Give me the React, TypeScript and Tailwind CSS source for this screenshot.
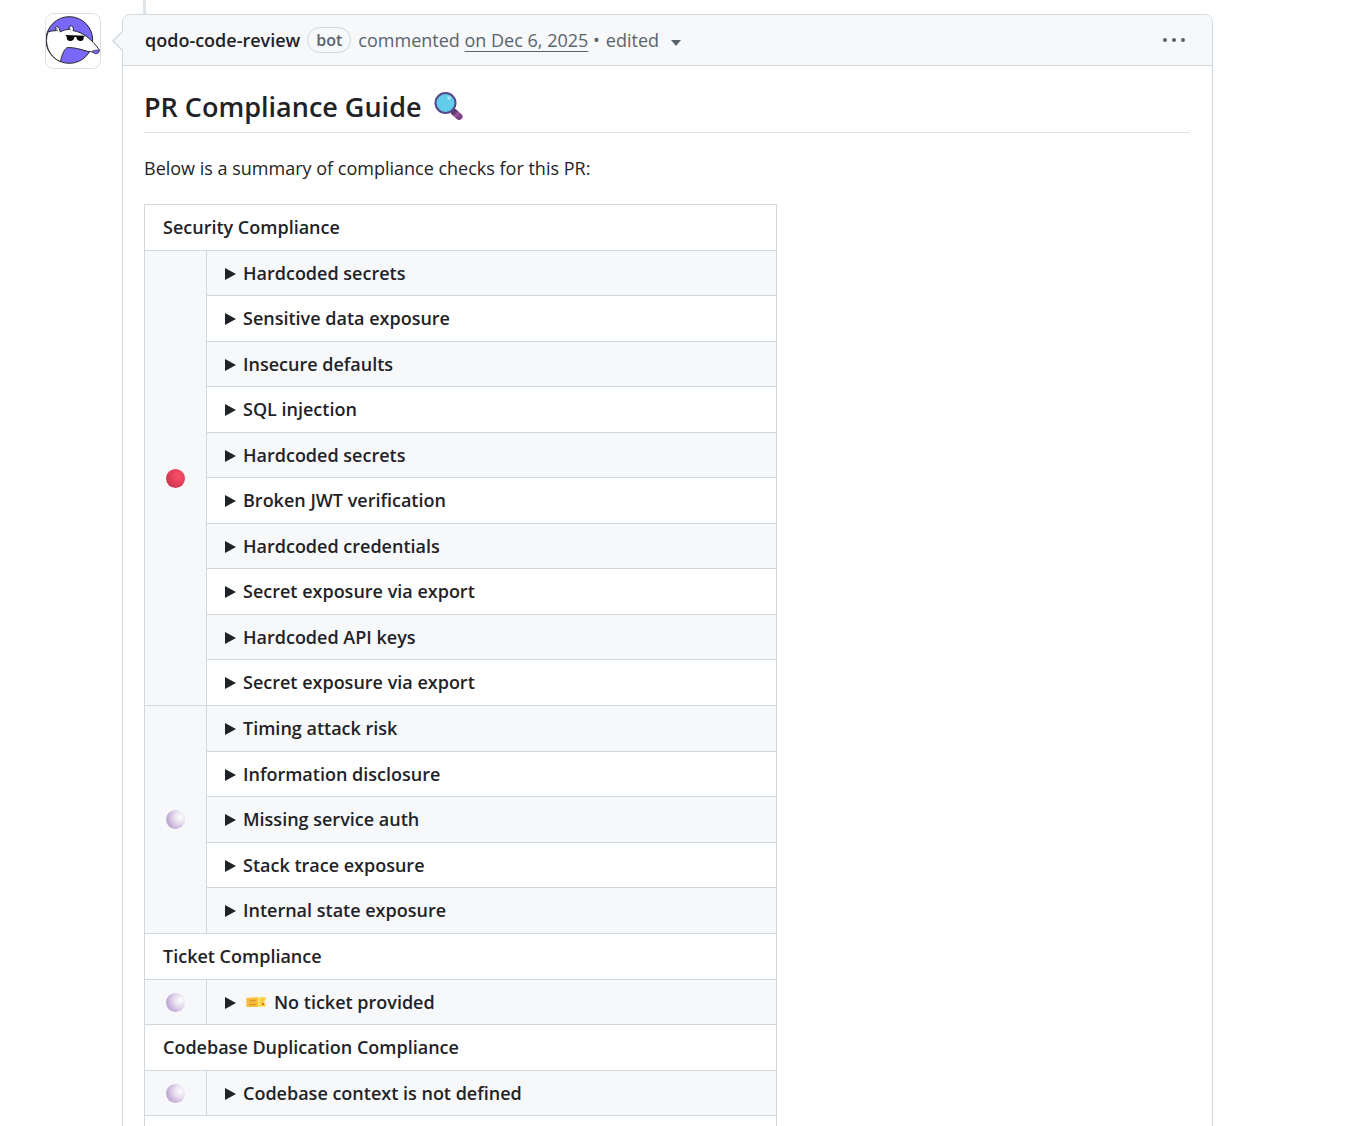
import type React from "react";

type Status = "red" | "white";

interface Check {
  label: string;
  ticket?: boolean;
}

interface CheckGroup {
  title?: string;
  status: Status;
  checks: Check[];
}

const groups: CheckGroup[] = [
  {
    title: "Security Compliance",
    status: "red",
    checks: [
      { label: "Hardcoded secrets" },
      { label: "Sensitive data exposure" },
      { label: "Insecure defaults" },
      { label: "SQL injection" },
      { label: "Hardcoded secrets" },
      { label: "Broken JWT verification" },
      { label: "Hardcoded credentials" },
      { label: "Secret exposure via export" },
      { label: "Hardcoded API keys" },
      { label: "Secret exposure via export" },
    ],
  },
  {
    status: "white",
    checks: [
      { label: "Timing attack risk" },
      { label: "Information disclosure" },
      { label: "Missing service auth" },
      { label: "Stack trace exposure" },
      { label: "Internal state exposure" },
    ],
  },
  {
    title: "Ticket Compliance",
    status: "white",
    checks: [{ label: "No ticket provided", ticket: true }],
  },
  {
    title: "Codebase Duplication Compliance",
    status: "white",
    checks: [{ label: "Codebase context is not defined" }],
  },
];

const Avatar: React.FC = () => (
  <svg
    viewBox="46 39 168 168"
    className="size-14 rounded-lg bg-white"
    role="img"
    aria-label="qodo-code-review"
  >
    <circle cx="119" cy="120" r="70" fill="#7968fa" stroke="#27272d" strokeWidth="3" />
    <path
      d="M55 96C63 93 71 92 80 92C75 84 77 79 82 80C88 81 90 88 92 96C99 91 108 89 119 88C116 81 120 77 126 78C132 80 132 88 130 92C158 95 187 118 209 150C209 158 203 160 193 158C188 156 184 155 174 154C153 149 136 141 112 143C101 151 96 168 92 185A70 70 0 0 1 55 96Z"
      fill="#fff"
      stroke="#27272d"
      strokeWidth="3"
      strokeLinejoin="round"
    />
    <path d="M80 84L84 94M120 83L122 91" stroke="#27272d" strokeWidth="2" fill="none" />
    <path d="M107 105L167 107L162 111C163 118 160 123 153 123C145 123 141 119 140 111L134 111C134 119 129 123 122 123C114 123 111 118 111 110Z" fill="#08080b" />
    <path d="M188 153C194 150 202 150 208 150C209 156 205 162 197 161C192 160 189 157 188 153Z" fill="#7968fa" stroke="#27272d" strokeWidth="2" />
    <rect x="47.5" y="40.5" width="165" height="165" rx="23" fill="none" stroke="#d9dee3" strokeWidth="3" />
  </svg>
);

const MagnifierIcon: React.FC = () => (
  <svg viewBox="0 0 30 30" className="size-[30px]" aria-hidden="true">
    <defs>
      <linearGradient id="handle" x1="0" y1="0" x2="1" y2="1">
        <stop offset="0" stopColor="#5f3a70" />
        <stop offset="0.5" stopColor="#a0569c" />
        <stop offset="1" stopColor="#7b4189" />
      </linearGradient>
    </defs>
    <path d="M17 18L20 21" stroke="#6c5185" strokeWidth="3" />
    <path d="M20.5 20.5L25 24.5" stroke="url(#handle)" strokeWidth="7" strokeLinecap="round" />
    <circle cx="11.5" cy="11" r="10" fill="#62cdeb" stroke="#56488a" strokeWidth="2" />
    <circle cx="15" cy="6" r="1.8" fill="#a9e8f8" />
  </svg>
);

const TicketIcon: React.FC = () => (
  <svg viewBox="0 0 20 12" className="h-3 w-5" aria-hidden="true">
    <path d="M0.5 2L19.500 1V4L18.500 5V7L19.500 8V10.500L0.5 11Z" fill="#fcd03c" />
    <path d="M0.5 2L12 1.500V11L0.5 11Z" fill="#f9bf3c" />
    <path d="M3 4.500H10M3 8.500H10" stroke="#e0973c" strokeWidth="1.500" />
    <path d="M13 1.500V11" stroke="#fff3c4" strokeWidth="1.500" strokeDasharray="1.500 1.500" />
    <path d="M16 7H18V9H16Z" fill="#c9792e" />
  </svg>
);

const StatusDot: React.FC<{ status: Status }> = ({ status }) => (
  <span
    role="img"
    aria-label={status}
    className={
      status === "red"
        ? "mx-auto block size-[19px] rounded-full bg-[radial-gradient(circle_at_65%_35%,#fb5068,#e03e58_50%,#b0324b)]"
        : "mx-auto block size-[19px] rounded-full bg-[radial-gradient(circle_at_75%_38%,#ffffff,#e6dcee_35%,#c3abd6_70%,#b5a8bc)]"
    }
  />
);

const CheckSummary: React.FC<{ check: Check }> = ({ check }) => (
  <details>
    <summary className="flex cursor-pointer list-none items-center gap-[7px] font-semibold">
      <svg viewBox="0 0 11 12" className="mt-0.5 h-3 w-[11px] shrink-0" aria-hidden="true">
        <path d="M0 0L11 6L0 12Z" fill="#1f2328" />
      </svg>
      {check.ticket ? (
        <span className="flex items-center gap-2 pl-[3px]">
          <TicketIcon />
          {check.label}
        </span>
      ) : (
        check.label
      )}
    </summary>
  </details>
);

const GroupRows: React.FC<{ group: CheckGroup }> = ({ group }) => {
  // row heights alternate 46/45, a title row takes the first tall slot
  const offset = group.title ? 1 : 0;

  return (
    <tbody>
      {group.title && (
        <tr className="h-[46px]">
          <th colSpan={2} scope="colgroup" className="border border-[#d1d9e0] px-[18px] pb-0.5 text-left font-semibold">
            {group.title}
          </th>
        </tr>
      )}
      {group.checks.map((check, i) => (
        <tr
          key={i}
          className={`${i % 2 === 0 ? "bg-[#f6f8fa]" : "bg-white"} ${(i + offset) % 2 === 0 ? "h-[46px]" : "h-[45px]"}`}
        >
          {i === 0 && (
            <td rowSpan={group.checks.length} className="border border-[#d1d9e0] bg-[#f6f8fa]">
              <StatusDot status={group.status} />
            </td>
          )}
          <td className="border border-[#d1d9e0] px-[18px] pb-px">
            <CheckSummary check={check} />
          </td>
        </tr>
      ))}
    </tbody>
  );
};

const CommentHeader: React.FC = () => (
  <header className="flex h-[50px] items-center justify-between rounded-t-lg bg-[#f6f8fa] pr-[26px] pl-[22px] text-[#59636e]">
    <div className="flex items-center">
      <a href="#author" className="font-semibold text-[#1f2328]">
        qodo-code-review
      </a>
      <span className="mx-[7px] flex h-[26px] items-center rounded-full border border-[#d1d9e0] px-2 text-base font-semibold">
        bot
      </span>
      <span>
        commented{" "}
        <a href="#comment" className="underline decoration-1 underline-offset-4">
          on Dec 6, 2025
        </a>{" "}
        •
      </span>
      <button type="button" className="ml-[6px] flex cursor-pointer items-center gap-3">
        edited
        <svg viewBox="0 0 10 6" className="mt-1.5 h-[6px] w-[10px]" aria-hidden="true">
          <path d="M0 0H10L5 6Z" fill="#59636e" />
        </svg>
      </button>
    </div>
    <button type="button" aria-label="Show options" className="cursor-pointer">
      <svg viewBox="0 0 24 4" className="h-1 w-6" fill="#59636e" aria-hidden="true">
        <circle cx="3" cy="2" r="2" />
        <circle cx="12" cy="2" r="2" />
        <circle cx="21" cy="2" r="2" />
      </svg>
    </button>
  </header>
);

export const App: React.FC = () => (
  <main className="flex h-screen items-start overflow-hidden bg-white pr-[134px] pl-[45px] font-['Open_Sans','Noto_Sans',sans-serif] text-lg leading-7 text-[#1f2328]">
    <div className="mt-[13px] mr-[21px] shrink-0">
      <Avatar />
    </div>
    <div className="min-w-0 flex-1">
      <div className="ml-[21px] h-[14px] w-[3px] bg-[#dfe4e9]" />
      <article className="relative min-h-screen rounded-lg border border-[#d1d9e0]">
        <svg viewBox="0 0 11 20" className="absolute top-4 -left-[11px] h-5 w-[11px]" aria-hidden="true">
          <path d="M11 0L1 10L11 20" fill="#f6f8fa" stroke="#d1d9e0" strokeWidth="1.500" />
        </svg>
        <CommentHeader />
        <div className="border-t border-[#d1d9e0] pt-[22px] pr-[22px] pl-[21px]">
          <h2 className="flex h-[45px] items-start gap-3 border-b border-[#dde3e8] text-[27px] leading-[38px] font-semibold">
            PR Compliance Guide
            <span className="mt-1">
              <MagnifierIcon />
            </span>
          </h2>
          <p className="mt-[21px]">Below is a summary of compliance checks for this PR:</p>
          <table className="mt-[22px] w-[633px] max-w-full table-fixed border-collapse">
            <colgroup>
              <col className="w-[62px]" />
              <col />
            </colgroup>
            {groups.map((group, i) => (
              <GroupRows key={i} group={group} />
            ))}
            <tbody>
              <tr className="h-[46px]">
                <td colSpan={2} className="border border-[#d1d9e0]" />
              </tr>
            </tbody>
          </table>
        </div>
      </article>
    </div>
  </main>
);

export default App;
